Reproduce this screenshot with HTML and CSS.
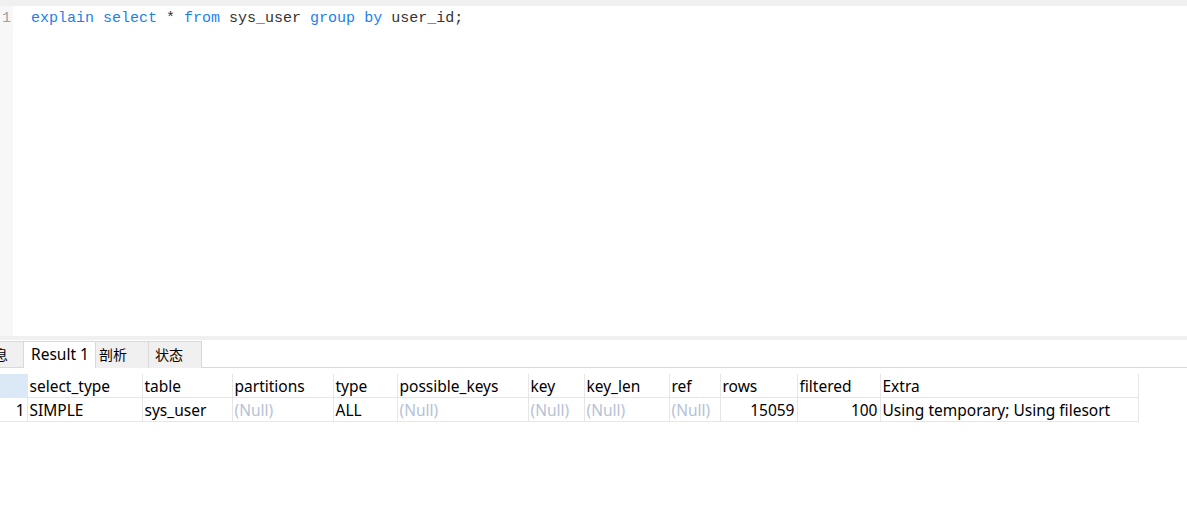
FILE: index.html
```html
<!DOCTYPE html>
<html>
<head>
<meta charset="utf-8">
<link rel="stylesheet" href="styles.css">
</head>
<body>
<div class="topbar"></div>
<div class="editor">
  <div class="gutter"><span class="lineno">1</span></div>
  <div class="code"><span class="kw">explain</span> <span class="kw">select</span> * <span class="kw">from</span> sys_user <span class="kw">group</span> <span class="kw">by</span> user_id;</div>
</div>
<div class="splitter"></div>
<div class="tabs">
  <div class="tab clipped"><span>息</span></div>
  <div class="tab active">Result 1</div>
  <div class="tab">剖析</div>
  <div class="tab">状态</div>
</div>
<div class="result">
  <table class="grid">
    <colgroup>
      <col class="c0"><col class="c1"><col class="c2"><col class="c3"><col class="c4"><col class="c5"><col class="c6"><col class="c7"><col class="c8"><col class="c9"><col class="c10"><col class="c11">
    </colgroup>
    <thead>
      <tr>
        <th class="rn"></th>
        <th>select_type</th><th>table</th><th>partitions</th><th>type</th><th>possible_keys</th><th>key</th><th>key_len</th><th>ref</th><th>rows</th><th>filtered</th><th>Extra</th>
      </tr>
    </thead>
    <tbody>
      <tr>
        <td class="num">1</td>
        <td>SIMPLE</td><td>sys_user</td><td class="null">(Null)</td><td>ALL</td><td class="null">(Null)</td><td class="null">(Null)</td><td class="null">(Null)</td><td class="null">(Null)</td><td class="num">15059</td><td class="num">100</td><td>Using temporary; Using filesort</td>
      </tr>
    </tbody>
  </table>
</div>
</body>
</html>
```
FILE: styles.css
```css
html, body {
  margin: 0;
  padding: 0;
  background: #ffffff;
  width: 1187px;
  height: 512px;
  overflow: hidden;
}
body {
  font-family: "Noto Sans", "Noto Sans CJK SC", sans-serif;
}
.topbar {
  height: 6px;
  background: #f0f0f0;
}
.editor {
  display: flex;
  height: 330px;
}
.gutter {
  width: 13px;
  background: #f7f7f7;
}
.lineno {
  display: block;
  padding-left: 2px;
  padding-top: 3px;
  font-family: "Liberation Mono", monospace;
  font-size: 15px;
  line-height: 20px;
  color: #a0a0a0;
}
.code {
  padding-left: 18px;
  padding-top: 3px;
  font-family: "Liberation Mono", monospace;
  font-size: 15px;
  line-height: 20px;
  color: #333333;
  white-space: pre;
}
.kw {
  color: #1c7ff0;
}
.splitter {
  height: 4px;
  background: #f0f0f0;
}
.tabs {
  display: flex;
  align-items: flex-end;
  height: 28px;
  padding-top: 1px;
  border-bottom: 1px solid #d9d9d9;
  box-sizing: border-box;
}
.tab {
  height: 27px;
  box-sizing: border-box;
  border: 1px solid #d9d9d9;
  border-bottom: none;
  background: #f0f0f0;
  font-family: "Noto Sans CJK SC", sans-serif;
  font-size: 14px;
  line-height: 24px;
  color: #000;
  padding: 0 5px;
  margin-bottom: -1px;
}
.tab.clipped {
  width: 23px;
  overflow: hidden;
  padding: 0;
  display: flex;
  justify-content: flex-end;
  border-left: none;
  border-right: none;
  margin-bottom: 0;
  height: 26px;
}
.tab.clipped span {
  margin-right: 15px;
}
.tab.active {
  background: #ffffff;
  width: 73px;
  padding-left: 7px;
  font-family: "Noto Sans", sans-serif;
  font-size: 15.5px;
}
.tab:nth-child(3) {
  width: 53px;
  border-left: none;
  padding-left: 3px;
}
.tab:nth-child(4) {
  width: 53px;
  border-left: none;
  padding-left: 6px;
}
.result {
  padding-top: 6px;
}
.grid {
  border-collapse: collapse;
  table-layout: fixed;
  width: 1138px;
  font-size: 15.5px;
  color: #000;
}
.c0 { width: 27px; }
.c1 { width: 115px; }
.c2 { width: 90px; }
.c3 { width: 101px; }
.c4 { width: 64px; }
.c5 { width: 131px; }
.c6 { width: 56px; }
.c7 { width: 85px; }
.c8 { width: 51px; }
.c9 { width: 77px; }
.c10 { width: 83px; }
.c11 { width: 258px; }
.grid th, .grid td {
  border: 1px solid #e6e6e6;
  height: 23px;
  padding: 0 2px 0 2px;
  text-align: left;
  font-weight: normal;
  white-space: nowrap;
  overflow: hidden;
  line-height: 22px;
}
.grid th {
  border-top: none;
}
.grid tr > :first-child {
  border-left: none;
}
.grid th.rn {
  background: #dbe8f6;
}
.grid td.num {
  text-align: right;
}
.grid td.null {
  color: #b5c2d6;
}
```
